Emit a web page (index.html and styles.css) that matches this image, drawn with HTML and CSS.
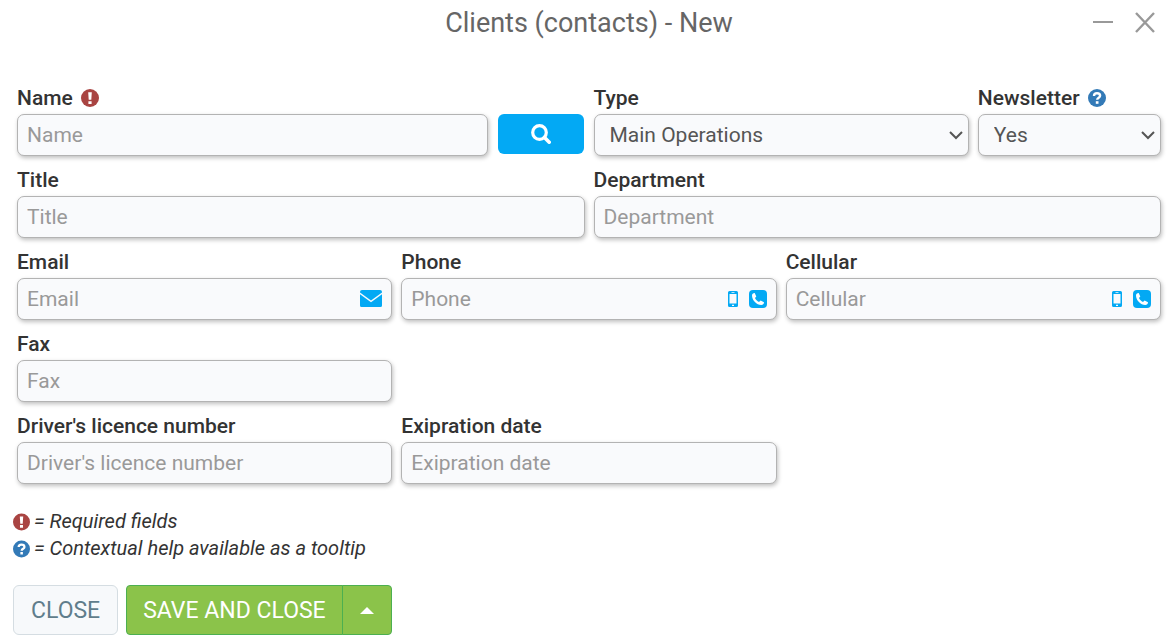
FILE: index.html
```
<!DOCTYPE html>
<html lang="en">

<head>
    <meta charset="UTF-8">
    <meta name="viewport" content="width=device-width, initial-scale=1.0">
    <title>Clients (contacts) - New</title>
    <link rel="stylesheet" href="styles.css">
</head>
<body>
    <!-- shared icons -->
    <svg class="sprite" aria-hidden="true">
        <symbol id="i-required" viewBox="0 0 18 18">
            <circle cx="9" cy="9" r="9" fill="#a94442"/>
            <path d="M7.2 3.2h3.6l-.5 7.6H7.7zM7.4 12.2h3.2v2.8H7.4z" fill="#fff"/>
        </symbol>
        <symbol id="i-help" viewBox="0 0 18 18">
            <circle cx="9" cy="9" r="9" fill="#337ab7"/>
            <path d="M6 6.9C6 5 7.2 4.3 9 4.3s3.1.9 3.1 2.5c0 2-2.9 1.9-2.9 4" fill="none" stroke="#fff" stroke-width="2.4"/>
            <path d="M7.8 12.2h2.7v2.6H7.8z" fill="#fff"/>
        </symbol>
        <symbol id="i-mobile" viewBox="0 0 10 16">
            <path fill-rule="evenodd" d="M1.5 0h7A1.5 1.5 0 0 1 10 1.5v13A1.5 1.5 0 0 1 8.5 16h-7A1.5 1.5 0 0 1 0 14.5v-13A1.5 1.5 0 0 1 1.5 0zM1.5 3v9.500h7V3zM3.5 1.1v.7h3v-.7zM4 13.7v1.2h2v-1.2z" fill="#03a9f4"/>
        </symbol>
        <symbol id="i-phone" viewBox="0 0 18 18">
            <rect width="18" height="18" rx="4" fill="#03a9f4"/>
            <path d="M5.7 3.1L7.3 6.5L6 8C6.7 9.7 8.2 11.3 10 12L11.6 10.6L15 12.3C15 14.2 13.8 15 12.3 15C7.5 14.7 3.3 10.5 3 5.7C3 4.2 3.9 3.1 5.7 3.1z" fill="#fff"/>
        </symbol>
    </svg>

    <div class="dialog">
        <header class="dialog-header">
            <h1>Clients (contacts) - New</h1>
            <div class="window-buttons">
                <button type="button" aria-label="Minimize">
                    <svg width="22" height="22" viewBox="0 0 22 22"><path d="M1 10h20" stroke="#999" stroke-width="2"/></svg>
                </button>
                <button type="button" aria-label="Close window">
                    <svg width="22" height="22" viewBox="0 0 22 22"><path d="M2 1l18 19M20 1L2 20" stroke="#999" stroke-width="2.4"/></svg>
                </button>
            </div>
        </header>

        <form>
            <div class="fields">
                <div class="field span-5">
                    <div class="label-row">
                        <label for="name">Name</label>
                        <svg class="badge"><use href="#i-required"/></svg>
                    </div>
                    <div class="control"><input id="name" type="text" placeholder="Name"></div>
                </div>
                <button class="search" type="button" aria-label="Search">
                    <svg width="20" height="20" viewBox="0 0 20 20"><circle cx="8.5" cy="8.5" r="6.8" fill="none" stroke="#fff" stroke-width="3.2"/><path d="M13.5 13.5l4.700 4.700" stroke="#fff" stroke-width="3.6" stroke-linecap="round"/></svg>
                </button>
                <div class="field span-4">
                    <div class="label-row"><label for="type">Type</label></div>
                    <div class="control select">
                        <select id="type"><option>Main Operations</option></select>
                        <svg class="chevron" viewBox="0 0 14 9"><path d="M1 1l6 6 6-6"/></svg>
                    </div>
                </div>
                <div class="field span-2">
                    <div class="label-row">
                        <label for="newsletter">Newsletter</label>
                        <svg class="badge"><use href="#i-help"/></svg>
                    </div>
                    <div class="control select">
                        <select id="newsletter"><option>Yes</option><option>No</option></select>
                        <svg class="chevron" viewBox="0 0 14 9"><path d="M1 1l6 6 6-6"/></svg>
                    </div>
                </div>

                <div class="field span-6">
                    <div class="label-row"><label for="title">Title</label></div>
                    <div class="control"><input id="title" type="text" placeholder="Title"></div>
                </div>
                <div class="field span-6">
                    <div class="label-row"><label for="department">Department</label></div>
                    <div class="control"><input id="department" type="text" placeholder="Department"></div>
                </div>

                <div class="field span-4">
                    <div class="label-row"><label for="email">Email</label></div>
                    <div class="control">
                        <input id="email" type="email" placeholder="Email">
                        <a href="#" aria-label="Send email">
                            <svg width="22" height="18" viewBox="0 0 22 18"><path d="M2 0h18a2 2 0 0 1 2 2v.6L11 10.500L0 2.600V2a2 2 0 0 1 2-2zM0 4.300l11 8 11-8V15.500a1.500 1.500 0 0 1-1.500 1.500h-19A1.500 1.500 0 0 1 0 15.500z" fill="#03a9f4"/></svg>
                        </a>
                    </div>
                </div>
                <div class="field span-4">
                    <div class="label-row"><label for="phone">Phone</label></div>
                    <div class="control">
                        <input id="phone" type="tel" placeholder="Phone">
                        <a href="#" aria-label="Text phone"><svg width="10" height="16"><use href="#i-mobile"/></svg></a>
                        <a href="#" aria-label="Call phone"><svg width="18" height="18"><use href="#i-phone"/></svg></a>
                    </div>
                </div>
                <div class="field span-4">
                    <div class="label-row"><label for="cellular">Cellular</label></div>
                    <div class="control">
                        <input id="cellular" type="tel" placeholder="Cellular">
                        <a href="#" aria-label="Text cellular"><svg width="10" height="16"><use href="#i-mobile"/></svg></a>
                        <a href="#" aria-label="Call cellular"><svg width="18" height="18"><use href="#i-phone"/></svg></a>
                    </div>
                </div>

                <div class="field span-4 new-row">
                    <div class="label-row"><label for="fax">Fax</label></div>
                    <div class="control"><input id="fax" type="tel" placeholder="Fax"></div>
                </div>

                <div class="field span-4 new-row">
                    <div class="label-row"><label for="licence">Driver's licence number</label></div>
                    <div class="control"><input id="licence" type="text" placeholder="Driver's licence number"></div>
                </div>
                <div class="field span-4">
                    <div class="label-row"><label for="expiration">Exipration date</label></div>
                    <div class="control"><input id="expiration" type="text" placeholder="Exipration date"></div>
                </div>
            </div>

            <div class="legend">
                <p><svg class="badge"><use href="#i-required"/></svg>= Required fields</p>
                <p><svg class="badge"><use href="#i-help"/></svg>= Contextual help available as a tooltip</p>
            </div>

            <div class="actions">
                <button class="btn" type="button">CLOSE</button>
                <div class="btn-group">
                    <button class="btn btn-save" type="submit">SAVE AND CLOSE</button>
                    <button class="btn btn-save btn-toggle" type="button" aria-label="More save options">
                        <svg width="14" height="8" viewBox="0 0 14 8"><path d="M0 8l7-7 7 7z" fill="#fff"/></svg>
                    </button>
                </div>
            </div>
        </form>
    </div>
</body>
</html>
```
FILE: styles.css
```
* {
    box-sizing: border-box;
    margin: 0;
    padding: 0;
}
body {
    background-color: #fff;
    color: #333;
    font-family: Roboto, "Liberation Sans", sans-serif;
    font-size: 21px;
}
button,
input,
select {
    font: inherit;
}
button {
    border: 0;
    background: none;
    cursor: pointer;
}
svg {
    display: block;
    flex: none;
}
.sprite {
    display: none;
}
.dialog {
    padding: 0 11px 8px 13px;
}

/* header */
.dialog-header {
    display: grid;
    grid-template-columns: 1fr auto 1fr;
    align-items: center;
    height: 46px;
    padding-left: 4px;
}
.dialog-header h1 {
    grid-column: 2;
    color: #666;
    font-size: 27px;
    font-weight: 400;
}
.window-buttons {
    display: flex;
    justify-content: flex-end;
    gap: 20px;
    padding-right: 5px;
}

/* fields */
.fields {
    display: grid;
    grid-template-columns: repeat(12, minmax(0, 1fr));
    gap: 12px 9px;
    padding: 40px 0 0 4px;
}
.span-2 {
    grid-column: span 2;
}
.span-4 {
    grid-column: span 4;
}
.span-5 {
    grid-column: span 5;
}
.span-6 {
    grid-column: span 6;
}
.new-row {
    grid-column: 1 / span 4;
}
.label-row {
    display: flex;
    align-items: center;
    gap: 8px;
    height: 28px;
    padding-bottom: 4px;
    font-weight: 500;
}
.badge {
    width: 18px;
    height: 18px;
}
.control {
    display: flex;
    align-items: center;
    height: 42px;
    border: 1px solid #b3b3b3;
    border-radius: 7px;
    background-color: #f9fafc;
    box-shadow: 1px 2px 4px rgba(0, 0, 0, 0.25);
}
.control input,
.control select {
    flex: 1;
    min-width: 0;
    height: 100%;
    padding: 0 9px;
    border: 0;
    outline: 0;
    background: none;
    color: #555;
}
.control input::placeholder {
    color: #999;
}
.control a {
    margin-right: 11px;
}
.control a:last-child {
    margin-right: 9px;
}
.select {
    display: grid;
}
.select select,
.select .chevron {
    grid-area: 1 / 1;
}
.control select {
    padding: 0 24px 0 15px;
    appearance: none;
}
.chevron {
    justify-self: end;
    width: 14px;
    height: 9px;
    margin-right: 5px;
    fill: none;
    stroke: #555;
    stroke-width: 2;
    pointer-events: none;
}
.search {
    display: flex;
    align-items: center;
    justify-content: center;
    align-self: end;
    height: 40px;
    margin: 0 1px 2px;
    border-radius: 6px;
    background-color: #03a9f4;
}

/* legend */
.legend {
    margin-top: 24px;
    font-size: 20px;
    font-style: italic;
    line-height: 27px;
}
.legend p {
    display: flex;
    align-items: center;
    gap: 4px;
}
.legend .badge {
    width: 17px;
}

/* buttons */
.actions {
    display: flex;
    gap: 8px;
    margin-top: 23px;
}
.btn-group {
    display: flex;
}
.btn {
    height: 50px;
    padding: 0 17px;
    border: 1px solid #d5dde2;
    border-radius: 6px;
    background-color: #f7f9fb;
    color: #607d8b;
    font-size: 23px;
}
.btn-save {
    padding: 0 16px;
    border-color: #4caf50;
    border-radius: 4px 0 0 4px;
    background-color: #8bc34a;
    color: #fff;
}
.btn-toggle {
    padding: 0 17px;
    margin-left: -1px;
    border-radius: 0 4px 4px 0;
}
```
